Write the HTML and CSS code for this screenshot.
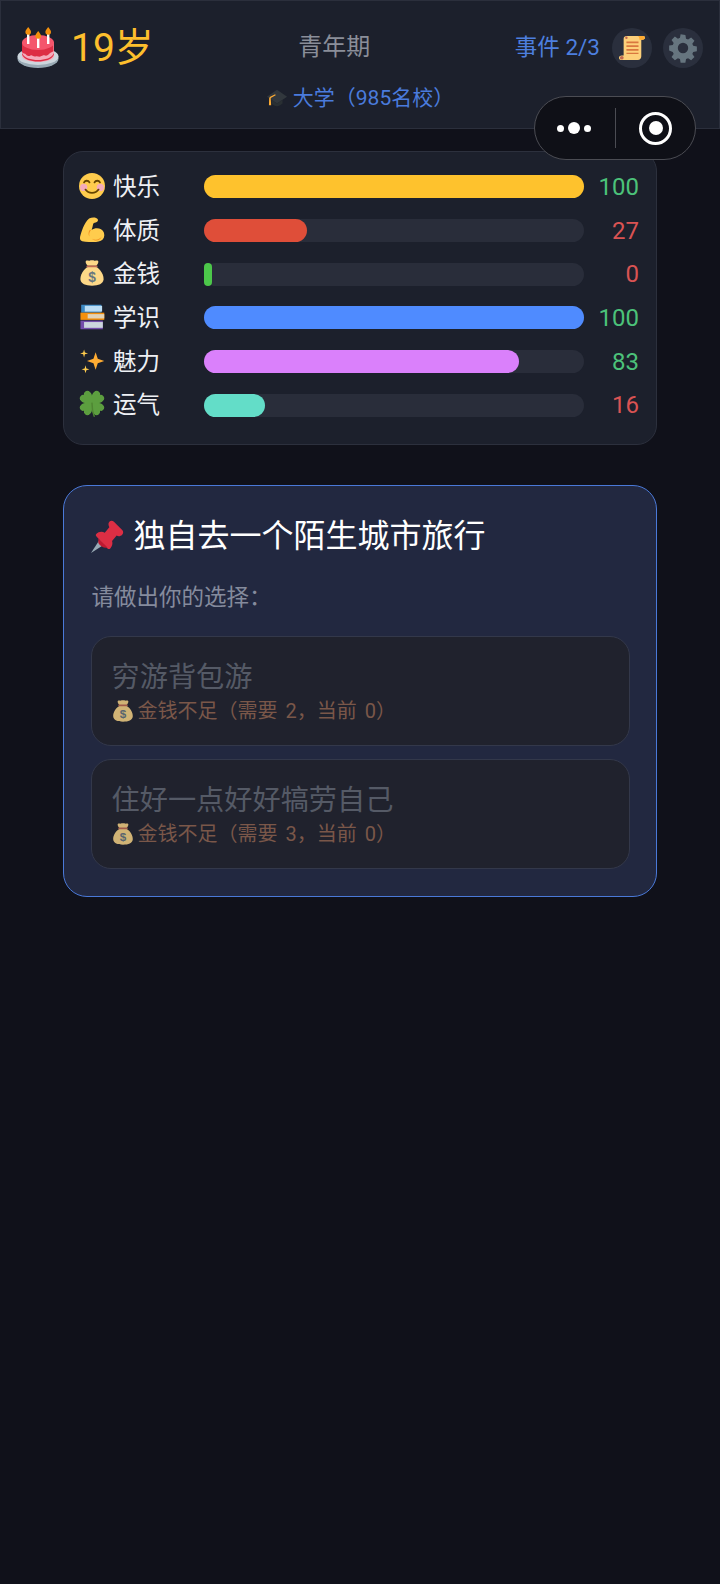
FILE: index.html
```html
<!DOCTYPE html>
<html lang="zh-CN">
<head>
    <meta charset="UTF-8">
    <meta name="viewport" content="width=device-width, initial-scale=1.0">
    <title>人生模拟</title>
    <link rel="stylesheet" href="styles.css">
</head>
<body>
    <svg class="defs" width="0" height="0">
        <symbol id="bag" viewBox="0 0 36 36">
            <path fill="#fdd888" d="M23.500 9.500C30 13 34.500 21 34 27c-.5 6-7 8.500-16 8.500S2.500 33 2 27C1.500 21 6 13 12.500 9.500z"/>
            <path fill="#fdd888" d="M12 8c-2-2-3.500-5-2.500-6.500C11 0 13 1.500 14.500 1c1.500-.7 5.500-.7 7 0 1.500.5 3.500-1 5 .5C27.500 3 26 6 24 8z"/>
            <path fill="#bf6952" d="M11.500 7.500h13a1.300 1.300 0 0 1 0 2.600h-13a1.300 1.300 0 0 1 0-2.600z"/>
        </symbol>
        <symbol id="leaf" viewBox="0 0 18 18">
            <path d="M9 18C4 14 0 10 0 5.500 0 2 2.500 0 5 0c1.800 0 3.200 1 4 2.500C9.800 1 11.200 0 13 0c2.500 0 5 2 5 5.500C18 10 14 14 9 18z"/>
        </symbol>
    </svg>

    <header class="topbar">
        <div class="topbar-main">
            <div class="age">
                <svg class="age-icon" viewBox="0 0 42 42">
                    <ellipse cx="21" cy="31.500" rx="20.500" ry="9.500" fill="#99aab5"/>
                    <ellipse cx="21" cy="29.500" rx="20.500" ry="8.500" fill="#ccd6dd"/>
                    <path fill="#f4abba" d="M5 15v14c0 3.500 7 6 16 6s16-2.500 16-6V15z"/>
                    <path fill="#dd2e44" d="M5 15v10c1 2 3 1 4 2.500s3 2 4.500 1 3 1.500 5 1 3.500.5 5 0 3-1.500 4.500-1 3.500-.5 4.500-2 3-1 4-2.500V15z"/>
                    <path fill="#dd2e44" d="M5 26c2 5 9 7 16 7s14-2 16-7v1.500c-2 5-9 7-16 7s-14-2-16-7z"/>
                    <ellipse cx="21" cy="15.500" rx="16" ry="7.500" fill="#f4566c"/>
                    <path fill="#fff" d="M10 5h2.400v12H10zM20 9h2.400v12H20zM30 5h2.400v12H30z"/>
                    <path fill="#f4900c" d="M11.200 0c2 2.500 2.800 3.500 2.800 5a2.800 2.800 0 0 1-5.600 0c0-1.500.8-2.500 2.800-5zM21.200 4c2 2.500 2.800 3.500 2.800 5a2.800 2.800 0 0 1-5.600 0c0-1.500.8-2.500 2.800-5zM31.200 0c2 2.500 2.800 3.500 2.800 5a2.800 2.800 0 0 1-5.600 0c0-1.500.8-2.500 2.800-5z"/>
                </svg>
                <span class="age-text">19岁</span>
            </div>
            <div class="stage">青年期</div>
            <div class="tools">
                <span class="event-count">事件 2/3</span>
                <span class="round-btn">
                    <svg class="tool-icon" viewBox="0 0 28 28">
                        <path fill="#fdd07a" d="M8 1h18c1.500 0 2 1 2 2s-1 2-2.500 2H24v18c0 2-1 4-4 4H3c-2 0-3-1-3-2.500S1 22 3 22h2V4c0-2 1.500-3 3-3z"/>
                        <path fill="#ffac33" d="M20 1h6c1.500 0 2 1 2 2s-1 2-2.500 2H22C22 3 21.500 1.500 20 1z"/>
                        <path fill="#d9773f" d="M8 7h13v2H8zM8 11h13v2H8zM8 15h13v2H8zM8 19h13v1.500H8z"/>
                        <circle cx="3" cy="24.500" r="2" fill="#c1694f"/>
                        <circle cx="8" cy="3" r="1.300" fill="#c1694f"/>
                    </svg>
                </span>
                <span class="round-btn">
                    <svg class="tool-icon" viewBox="0 0 24 24">
                        <path fill="#66757f" fill-rule="evenodd" d="M14.200 0l.6 3.400 1.900.8 2.800-2 3.100 3.100-2 2.800.8 1.900 3.400.6v4.400l-3.400.6-.8 1.900 2 2.800-3.100 3.100-2.800-2-1.900.8-.6 3.400H9.800l-.6-3.400-1.900-.8-2.800 2-3.100-3.100 2-2.800-.8-1.900L-.8 14.200V9.800l3.400-.6.8-1.900-2-2.800 3.100-3.100 2.800 2 1.900-.8.6-3.400zM12 7.200a4.800 4.800 0 1 0 0 9.600 4.800 4.800 0 0 0 0-9.600z"/>
                    </svg>
                </span>
            </div>
        </div>
        <div class="school">
            <svg class="school-icon" viewBox="0 0 24 24">
                <path fill="#31373d" d="M12 3l11 7.500L12 18 1 10.500z"/>
                <path fill="#292f33" d="M6 14v4c2 2 4 3 6 3s5-2 6-3v-4l-6 4z"/>
                <path fill="#ffac33" d="M3.500 11.500h1.600l.5 8.500H3.200z"/>
                <path fill="#ffac33" d="M4 11l6-3 .6 1-6 3.400z"/>
            </svg>
            <span>大学（985名校）</span>
        </div>
    </header>

    <div class="capsule">
        <div class="capsule-more">
            <i class="dot"></i><i class="dot dot-big"></i><i class="dot"></i>
        </div>
        <div class="capsule-line"></div>
        <div class="capsule-close"><i></i></div>
    </div>

    <main class="content">
        <section class="stats">
            <div class="stat">
                <svg class="stat-icon" viewBox="0 0 36 36">
                    <circle cx="18" cy="18" r="18" fill="#ffcc4d"/>
                    <circle cx="6.500" cy="20" r="5" fill="#f4abba"/>
                    <circle cx="29.500" cy="20" r="5" fill="#f4abba"/>
                    <path fill="none" stroke="#664500" stroke-width="2.500" stroke-linecap="round" d="M7 13c1.500-3 6-3 7.500 0M21.500 13c1.500-3 6-3 7.500 0M9 23c4 6 14 6 18 0"/>
                </svg>
                <span class="stat-name">快乐</span>
                <div class="track"><div class="fill fill-joy" style="width:100%"></div></div>
                <span class="stat-val good">100</span>
            </div>
            <div class="stat">
                <svg class="stat-icon" viewBox="0 0 36 36">
                    <path fill="#ffcc4d" d="M14 2c4-2 10-2 12 1 1 2-.5 4-3 4.500-2 .5-3 .5-3.500 2.500-.5 2.500-1 5-2 8 3-2.500 9-3.500 13-1 4 2.500 5.500 7 4 11.500-1.500 4-6 6-11 6-6 0-14 0-19-1-3-.8-3.500-3-3-6C3 21 7 8 14 2z"/>
                    <path fill="#f19020" d="M18 30c4 2.500 11 1.500 13.500-3-2 6-10 7-13.500 3zM16.500 18.500c-2 2-3 5-2 8.500-2-3-1.500-7 .5-9.500z"/>
                </svg>
                <span class="stat-name">体质</span>
                <div class="track"><div class="fill fill-body" style="width:27%"></div></div>
                <span class="stat-val bad">27</span>
            </div>
            <div class="stat">
                <svg class="stat-icon" viewBox="0 0 36 36">
                    <use href="#bag" width="36" height="36"/>
                    <text x="18" y="30" text-anchor="middle" class="bag-sign">$</text>
                </svg>
                <span class="stat-name">金钱</span>
                <div class="track"><div class="fill fill-money" style="width:2%"></div></div>
                <span class="stat-val bad">0</span>
            </div>
            <div class="stat">
                <svg class="stat-icon" viewBox="0 0 36 36">
                    <path fill="#3b88c3" d="M3 1h28v11H3z"/>
                    <path fill="#bbddf5" d="M8 2.500h24v8H8z"/>
                    <path fill="#f4900c" d="M2 12h33v10H2z"/>
                    <path fill="#e1d3b8" d="M12 14h23v6H12z"/>
                    <path fill="#744eaa" d="M2 23h31v12H2z"/>
                    <path fill="#ccd6dd" d="M7 25h26v8H7z"/>
                </svg>
                <span class="stat-name">学识</span>
                <div class="track"><div class="fill fill-know" style="width:100%"></div></div>
                <span class="stat-val good">100</span>
            </div>
            <div class="stat">
                <svg class="stat-icon" viewBox="0 0 36 36">
                    <path fill="#ffac33" d="M23 6l3 9 9 3-9 3-3 9-3-9-9-3 9-3z"/>
                    <path fill="#ffcc4d" d="M7 2l1.200 4.300L12.500 7.500 8.200 8.700 7 13 5.800 8.700 1.500 7.500 5.800 6.300zM9 24l1.200 4.300 4.300 1.200-4.300 1.200L9 35l-1.200-4.300-4.300-1.200 4.300-1.200z"/>
                </svg>
                <span class="stat-name">魅力</span>
                <div class="track"><div class="fill fill-charm" style="width:83%"></div></div>
                <span class="stat-val good">83</span>
            </div>
            <div class="stat">
                <svg class="stat-icon clover" viewBox="0 0 36 36">
                    <use href="#leaf" width="18" height="18" transform="translate(18 16.500) rotate(135) translate(-9 -18)"/>
                    <use href="#leaf" width="18" height="18" transform="translate(18 16.500) rotate(-135) translate(-9 -18)"/>
                    <use href="#leaf" width="18" height="18" transform="translate(18 16.500) rotate(45) translate(-9 -18)"/>
                    <use href="#leaf" width="18" height="18" transform="translate(18 16.500) rotate(-45) translate(-9 -18)"/>
                    <path fill="none" stroke="#4e8532" stroke-width="2" stroke-linecap="round" d="M18 17c0 6 .5 12 3 18"/>
                </svg>
                <span class="stat-name">运气</span>
                <div class="track"><div class="fill fill-luck" style="width:16%"></div></div>
                <span class="stat-val bad">16</span>
            </div>
        </section>

        <section class="event">
            <h2 class="event-title">
                <svg class="pin" viewBox="0 0 36 36">
                    <path fill="#99aab5" d="M0 36l11-17 6 6z"/>
                    <path fill="#dd2e44" d="M20 2c1.500-1.500 3.500-1.500 5 0l9 9c1.500 1.500 1.500 3.500 0 5-1.800 1.800-4 2-6 1l-5 6c1 3 0 6-2 8-1 1-2 1-3 0L6 18c-1-1-1-2 0-3 2-2 6-3 9-1l5-6c-1-2-1.500-4.500 0-6z"/>
                    <path fill="#be1931" d="M8 20l10 10c-3 1-8-1-10-5z"/>
                </svg>
                <span>独自去一个陌生城市旅行</span>
            </h2>
            <p class="event-hint">请做出你的选择：</p>
            <div class="choice">
                <div class="choice-title">穷游背包游</div>
                <div class="choice-lack">
                    <svg class="lack-icon" viewBox="0 0 36 36">
                        <use href="#bag" width="36" height="36"/>
                        <text x="18" y="30" text-anchor="middle" class="bag-sign">$</text>
                    </svg>
                    <span>金钱不足（需要 2，当前 0）</span>
                </div>
            </div>
            <div class="choice">
                <div class="choice-title">住好一点好好犒劳自己</div>
                <div class="choice-lack">
                    <svg class="lack-icon" viewBox="0 0 36 36">
                        <use href="#bag" width="36" height="36"/>
                        <text x="18" y="30" text-anchor="middle" class="bag-sign">$</text>
                    </svg>
                    <span>金钱不足（需要 3，当前 0）</span>
                </div>
            </div>
        </section>
    </main>
</body>
</html>
```

FILE: styles.css
```css
* {
    box-sizing: border-box;
}
html, body {
    height: 100%;
}
body {
    margin: 0;
    background: #10111a;
    color: #fff;
    font-family: Roboto, "Noto Sans CJK SC", sans-serif;
    position: relative;
    overflow: hidden;
}
.defs {
    position: absolute;
}
.bag-sign {
    font-family: "Liberation Sans", sans-serif;
    font-size: 19px;
    font-weight: 700;
    fill: #67757f;
}
.clover {
    fill: #5c9e3f;
}

/* header */
.topbar {
    height: 129px;
    background: #1c202c;
    border: 1px solid #2b2f3c;
    padding: 26px 16px 0;
}
.topbar-main {
    display: flex;
    align-items: center;
    justify-content: space-between;
    height: 42px;
}
.age {
    display: flex;
    align-items: center;
    gap: 12px;
}
.age-icon {
    width: 42px;
    height: 42px;
}
.age-text {
    font-size: 39px;
    line-height: 42px;
    color: #fdbf2d;
}
.stage {
    font-size: 24px;
    color: #8a8e99;
    margin-bottom: 7px;
}
.tools {
    display: flex;
    align-items: center;
    gap: 11px;
}
.event-count {
    font-size: 22.500px;
    color: #4d7fdf;
    margin-right: 1px;
    margin-bottom: 7px;
}
.round-btn {
    width: 40px;
    height: 40px;
    border-radius: 50%;
    background: #2a2f3d;
    display: flex;
    align-items: center;
    justify-content: center;
}
.tool-icon {
    width: 26px;
    height: 26px;
    overflow: visible;
}
.school {
    display: flex;
    align-items: center;
    justify-content: center;
    gap: 5px;
    margin-top: 14px;
    font-size: 21px;
    line-height: 30px;
    color: #4a7bdc;
}
.school-icon {
    width: 22px;
    height: 22px;
}

/* wechat capsule */
.capsule {
    position: absolute;
    left: 534px;
    top: 96px;
    width: 162px;
    height: 64px;
    border: 1.500px solid #4b4c53;
    border-radius: 32px;
    background: #0f1017;
    display: flex;
    align-items: center;
}
.capsule-more {
    width: 80px;
    padding-right: 2px;
    display: flex;
    align-items: center;
    justify-content: center;
    gap: 4px;
}
.dot {
    width: 7px;
    height: 7px;
    border-radius: 50%;
    background: #fff;
}
.dot-big {
    width: 12px;
    height: 12px;
}
.capsule-line {
    width: 1px;
    height: 40px;
    background: #4b4c53;
}
.capsule-close {
    flex: 1;
    display: flex;
    justify-content: center;
}
.capsule-close i {
    width: 33px;
    height: 33px;
    border: 3.500px solid #fff;
    border-radius: 50%;
    display: flex;
    align-items: center;
    justify-content: center;
}
.capsule-close i::after {
    content: "";
    width: 14px;
    height: 14px;
    border-radius: 50%;
    background: #fff;
}

/* page */
.content {
    padding: 22px 63px 0;
}
.stats {
    height: 294px;
    background: #1c202c;
    border: 1px solid #2c303d;
    border-radius: 20px;
    padding: 23px 15px 0;
    display: flex;
    flex-direction: column;
    gap: 20px;
}
.stat {
    display: flex;
    align-items: center;
    height: 23.700px;
}
.stat-icon {
    width: 26px;
    height: 26px;
    margin-bottom: 2px;
    overflow: visible;
    flex: none;
}
.stat-name {
    width: 99px;
    padding-left: 8px;
    padding-bottom: 4px;
    font-size: 23.500px;
    color: #eef0f4;
    flex: none;
}
.track {
    width: 380px;
    height: 23px;
    border-radius: 12px;
    background: #292d3a;
    flex: none;
}
.fill {
    height: 100%;
    border-radius: 12px;
    min-width: 8px;
}
.fill-joy { background: #fec22d; }
.fill-body { background: #df4e39; }
.fill-money { background: #4cc74a; }
.fill-know { background: #4f8bff; }
.fill-charm { background: #da80fb; }
.fill-luck { background: #63ddc8; }
.stat-val {
    flex: 1;
    padding-right: 2px;
    text-align: right;
    font-size: 24px;
}
.good { color: #4cc27a; }
.bad { color: #d95353; }

.event {
    margin-top: 40px;
    height: 412px;
    background: #222840;
    border: 1.500px solid #4a79d8;
    border-radius: 24px;
    padding: 27px 26.500px 0;
}
.event-title {
    margin: 0;
    display: flex;
    align-items: center;
    gap: 10px;
    font-size: 32px;
    font-weight: 400;
    line-height: 46px;
}
.pin {
    width: 33px;
    height: 33px;
}
.event-hint {
    margin: 22px 0 0;
    padding-left: 1px;
    font-size: 22.500px;
    line-height: 32px;
    color: #858b9d;
}
.choice {
    height: 110px;
    margin-top: 13px;
    background: #20222d;
    border: 1.500px solid #33384a;
    border-radius: 20px;
    padding: 21px 20px 0;
}
.event-hint + .choice {
    margin-top: 23px;
}
.choice-title {
    font-size: 28.200px;
    line-height: 40px;
    color: #555a66;
}
.choice-lack {
    display: flex;
    align-items: center;
    gap: 4px;
    font-size: 20px;
    line-height: 28px;
    word-spacing: 3px;
    color: #7a5749;
    margin-top: -1px;
}
.lack-icon {
    width: 22px;
    height: 22px;
    opacity: .8;
}
```
